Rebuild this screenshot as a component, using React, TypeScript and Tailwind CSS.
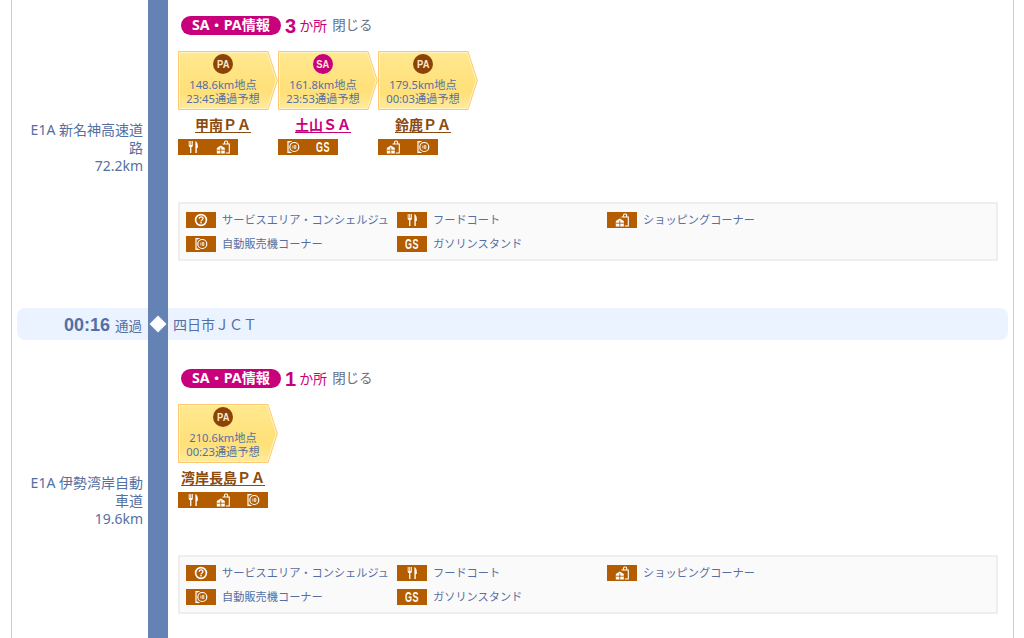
const sans = "font-['Noto_Sans','Noto_Sans_CJK_JP',sans-serif]"

type IconName = 'help' | 'food' | 'shop' | 'vending' | 'gs'

function ServiceIcon({ name }: { name: IconName }) {
  if (name === 'gs') {
    return (
      <span className="flex h-4 w-[30px] items-center justify-center bg-[#b35c00] font-['Liberation_Sans',sans-serif] text-[14px] font-bold leading-none text-white">
        <span className="inline-block scale-x-[0.64] tracking-[1px]">GS</span>
      </span>
    )
  }
  return (
    <span className="flex h-4 w-[30px] items-center justify-center bg-[#b35c00]">
      <svg width="30" height="16" viewBox="0 0 30 16" fill="none">
        {name === 'help' && (
          <>
            <circle cx="15" cy="8" r="5.4" stroke="#fff" strokeWidth="1.6" />
            <path d="M13.2 6.8c0-2.4 3.8-2.4 3.8-.2 0 1.4-2 1.3-2 2.8" stroke="#fff" strokeWidth="1.3" />
            <rect x="14.3" y="10" width="1.4" height="1.4" fill="#fff" />
          </>
        )}
        {name === 'food' && (
          <>
            <path d="M10.7 2v4.5c0 1 .6 1.5 1.4 1.6V14h1.3V8.1c.8-.1 1.4-.6 1.4-1.6V2h-.9v4h-.6V2h-1v4h-.7V2z" fill="#fff" />
            <path d="M17.4 14V2c1.5.6 2.4 2.4 2.4 5v2h-1v5z" fill="#fff" />
          </>
        )}
        {name === 'shop' && (
          <>
            <path d="M16.5 5V3.4c0-.8.5-1.4 1.2-1.4h.8c.7 0 1.2.6 1.2 1.4V5M14.5 5h6.8v9h-3.5" stroke="#fff" strokeWidth="1.1" />
            <path d="M8.8 9 12.8 6.5 16.8 9V14.5H8.8z" fill="#fff" />
            <path d="M8.8 11.2h8M12.8 8.5v6" stroke="#b35c00" strokeWidth="0.9" />
          </>
        )}
        {name === 'vending' && (
          <>
            <path d="M13.5 2.5H10V13.5H13.5" stroke="#fff" strokeWidth="1.2" />
            <path d="M10 2.5 12 4M10 13.5 12 12" stroke="#fff" strokeWidth="0.7" />
            <circle cx="16.3" cy="8" r="4.5" stroke="#fff" strokeWidth="1.2" />
            <path d="M14.8 6.5v3M16.2 6.5h1.7v3h-1.7zM16.2 8h1.7" stroke="#fff" strokeWidth="0.7" />
          </>
        )}
      </svg>
    </span>
  )
}

interface Stop {
  type: 'PA' | 'SA'
  km: string
  time: string
  name: string
  icons: IconName[]
}

function StopCard({ stop }: { stop: Stop }) {
  const isSa = stop.type === 'SA'
  return (
    <div className="w-[100px] shrink-0">
      <div className="relative h-[59px] w-[100px]">
        <svg className="absolute inset-0" width="100" height="59" viewBox="0 0 100 59">
          <defs>
            <linearGradient id="cardFill" x1="0" y1="0" x2="0" y2="1">
              <stop offset="0" stopColor="#ffe88f" />
              <stop offset="0.7" stopColor="#ffe078" />
              <stop offset="1" stopColor="#ffeb9e" />
            </linearGradient>
          </defs>
          <path d="M.5.5H90L99.3 29.5 90 58.5H.5z" fill="url(#cardFill)" stroke="#ffc870" />
          <path d="M1.5 1.5H89.3L98.2 29.5 89.3 57.5H1.5z" fill="none" stroke="#fff2c4" />
        </svg>
        <div className="relative flex w-[90px] flex-col items-center pt-[3px] text-[11.2px] leading-[14px] text-[#546fa3]">
          <span
            className={`mb-[4px] flex h-5 w-5 items-center justify-center rounded-full font-['Liberation_Sans',sans-serif] text-[11px] font-bold leading-none text-[#fde9d0] ${
              isSa ? 'bg-[#c9007b]' : 'bg-[#8b4308]'
            }`}
          >
            <span className="inline-block scale-x-[0.85]">{stop.type}</span>
          </span>
          <span className="whitespace-nowrap">{stop.km}地点</span>
          <span className="whitespace-nowrap">{stop.time}通過予想</span>
        </div>
      </div>
      <div className="w-[90px] pt-[2px] text-center">
        <a
          className={`whitespace-nowrap text-[14px] font-bold leading-[19px] underline underline-offset-2 ${
            isSa ? 'text-[#c9007b]' : 'text-[#8b4a0f]'
          }`}
        >
          {stop.name}
        </a>
      </div>
      <div className="mt-[3px] flex w-fit">
        {stop.icons.map((icon, i) => (
          <ServiceIcon key={i} name={icon} />
        ))}
      </div>
    </div>
  )
}

const legend: { icon: IconName; label: string }[] = [
  { icon: 'help', label: 'サービスエリア・コンシェルジュ' },
  { icon: 'food', label: 'フードコート' },
  { icon: 'shop', label: 'ショッピングコーナー' },
  { icon: 'vending', label: '自動販売機コーナー' },
  { icon: 'gs', label: 'ガソリンスタンド' },
]

function Legend() {
  return (
    <div className="grid h-[59px] w-[820px] grid-cols-[211px_210px_1fr] content-start gap-y-2 border-2 border-[#eeeeee] bg-[#fafafa] pl-[6px] pt-2">
      {legend.map((item) => (
        <div key={item.label} className="flex h-4 items-center">
          <ServiceIcon name={item.icon} />
          <span className="whitespace-nowrap pl-[6px] text-[11.2px] leading-4 text-[#546fa3]">{item.label}</span>
        </div>
      ))}
    </div>
  )
}

function Section({
  road,
  roadKm,
  count,
  stops,
}: {
  road: string
  roadKm: string
  count: number
  stops: Stop[]
}) {
  return (
    <div className="flex h-[321px]">
      <div className="flex w-[136px] shrink-0 items-center justify-end pr-[5px]">
        <p className="w-[114px] text-right text-[14px] leading-[18px] text-[#546fa3]">
          {road}
          <br />
          {roadKm}
        </p>
      </div>
      <div className="w-5 shrink-0 bg-[#6482b4]" />
      <div className="pl-[10px] pt-[29px]">
        <div className="flex h-[19px] items-center pl-[3px]">
          <span className="flex h-[19px] w-[100px] items-center justify-center whitespace-nowrap rounded-full bg-[#c9007b] text-[14.2px] font-bold leading-none text-white">
            SA・PA情報
          </span>
          <span className="pl-[4px] font-['Liberation_Sans',sans-serif] text-[20px] font-bold leading-none text-[#c9007b]">
            {count}
          </span>
          <span className="pl-[3px] text-[14px] text-[#c9007b]">か所</span>
          <span className="pl-[5px] text-[13.5px] text-[#666f7f]">閉じる</span>
        </div>
        <div className="flex pt-[16px]">
          {stops.map((stop) => (
            <StopCard key={stop.name} stop={stop} />
          ))}
        </div>
        <div className="pt-[47px]">
          <Legend />
        </div>
      </div>
    </div>
  )
}

const firstStops: Stop[] = [
  { type: 'PA', km: '148.6km', time: '23:45', name: '甲南ＰＡ', icons: ['food', 'shop'] },
  { type: 'SA', km: '161.8km', time: '23:53', name: '土山ＳＡ', icons: ['vending', 'gs'] },
  { type: 'PA', km: '179.5km', time: '00:03', name: '鈴鹿ＰＡ', icons: ['shop', 'vending'] },
]

const secondStops: Stop[] = [
  { type: 'PA', km: '210.6km', time: '00:23', name: '湾岸長島ＰＡ', icons: ['food', 'shop', 'vending'] },
]

export default function App() {
  return (
    <div className={`h-[638px] w-[1024px] overflow-hidden bg-white ${sans}`}>
      <div className="-mt-[13px] ml-[11px] h-[700px] w-[1003px] border-x border-[#cccccc]">
        <Section road="E1A 新名神高速道路" roadKm="72.2km" count={3} stops={firstStops} />
        <div className="mx-[5px] flex h-8 items-center rounded-lg bg-[#eaf3ff]">
          <div className="flex w-[131px] shrink-0 items-baseline justify-end pr-[6px] pt-[2px] text-[#546fa3]">
            <span className="font-['Liberation_Sans',sans-serif] text-[18px] font-bold">00:16</span>
            <span className="pl-[5px] text-[13.5px]">通過</span>
          </div>
          <div className="relative h-full w-5 shrink-0 bg-[#6482b4]">
            <span className="absolute left-[4px] top-[10px] h-3 w-3 rotate-45 bg-white" />
          </div>
          <span className="pl-[5px] text-[14px] text-[#546fa3]">四日市ＪＣＴ</span>
        </div>
        <Section road="E1A 伊勢湾岸自動車道" roadKm="19.6km" count={1} stops={secondStops} />
      </div>
    </div>
  )
}
